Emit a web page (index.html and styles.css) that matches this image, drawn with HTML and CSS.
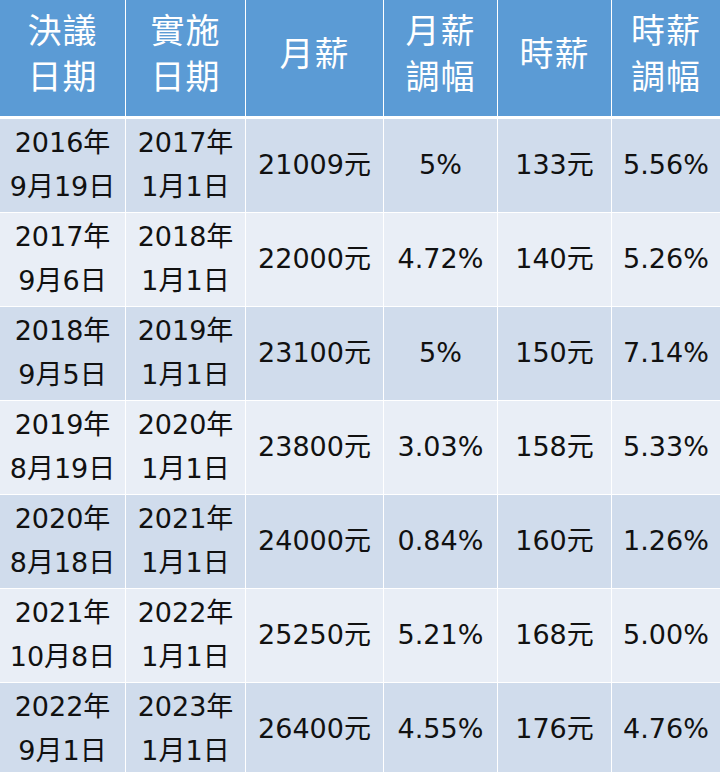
FILE: index.html
```html
<!DOCTYPE html>
<html lang="zh-Hant">
<head>
<meta charset="utf-8">
<link rel="stylesheet" href="styles.css">
</head>
<body>
<div class="table">
  <div class="row head">
    <div class="cell">決議<br>日期</div>
    <div class="cell">實施<br>日期</div>
    <div class="cell">月薪</div>
    <div class="cell">月薪<br>調幅</div>
    <div class="cell">時薪</div>
    <div class="cell">時薪<br>調幅</div>
  </div>
  <div class="row odd">
    <div class="cell">2016年<br>9月19日</div>
    <div class="cell">2017年<br>1月1日</div>
    <div class="cell">21009元</div>
    <div class="cell">5%</div>
    <div class="cell">133元</div>
    <div class="cell">5.56%</div>
  </div>
  <div class="row even">
    <div class="cell">2017年<br>9月6日</div>
    <div class="cell">2018年<br>1月1日</div>
    <div class="cell">22000元</div>
    <div class="cell">4.72%</div>
    <div class="cell">140元</div>
    <div class="cell">5.26%</div>
  </div>
  <div class="row odd">
    <div class="cell">2018年<br>9月5日</div>
    <div class="cell">2019年<br>1月1日</div>
    <div class="cell">23100元</div>
    <div class="cell">5%</div>
    <div class="cell">150元</div>
    <div class="cell">7.14%</div>
  </div>
  <div class="row even">
    <div class="cell">2019年<br>8月19日</div>
    <div class="cell">2020年<br>1月1日</div>
    <div class="cell">23800元</div>
    <div class="cell">3.03%</div>
    <div class="cell">158元</div>
    <div class="cell">5.33%</div>
  </div>
  <div class="row odd">
    <div class="cell">2020年<br>8月18日</div>
    <div class="cell">2021年<br>1月1日</div>
    <div class="cell">24000元</div>
    <div class="cell">0.84%</div>
    <div class="cell">160元</div>
    <div class="cell">1.26%</div>
  </div>
  <div class="row even">
    <div class="cell">2021年<br>10月8日</div>
    <div class="cell">2022年<br>1月1日</div>
    <div class="cell">25250元</div>
    <div class="cell">5.21%</div>
    <div class="cell">168元</div>
    <div class="cell">5.00%</div>
  </div>
  <div class="row odd">
    <div class="cell">2022年<br>9月1日</div>
    <div class="cell">2023年<br>1月1日</div>
    <div class="cell">26400元</div>
    <div class="cell">4.55%</div>
    <div class="cell">176元</div>
    <div class="cell">4.76%</div>
  </div>
</div>
</body>
</html>
```

FILE: styles.css
```css
html, body {
  margin: 0;
  padding: 0;
  background: #ffffff;
}
.table {
  display: flex;
  flex-direction: column;
  gap: 1px;
  width: 720px;
  height: 772px;
  overflow: hidden;
  font-family: "DejaVu Sans", "Noto Sans CJK TC", sans-serif;
  color: #111;
}
.row {
  display: grid;
  grid-template-columns: 125px 119px 137px 113px 113px 108px;
  column-gap: 1px;
  flex: 0 0 auto;
}
.row .cell {
  display: flex;
  align-items: center;
  justify-content: center;
  text-align: center;
  box-sizing: border-box;
}
.head {
  height: 116px;
  margin-bottom: 2px;
}
.head .cell {
  background: #5b9bd5;
  color: #ffffff;
  font-family: "Noto Sans CJK TC", sans-serif;
  font-size: 34px;
  line-height: 46px;
  letter-spacing: 1px;
  padding-bottom: 12px;
}
.odd .cell, .even .cell {
  height: 93px;
  font-size: 27px;
  line-height: 44px;
  padding-bottom: 2px;
}
.odd .cell {
  background: #d0dcec;
}
.even .cell {
  background: #e9eef6;
}
```
